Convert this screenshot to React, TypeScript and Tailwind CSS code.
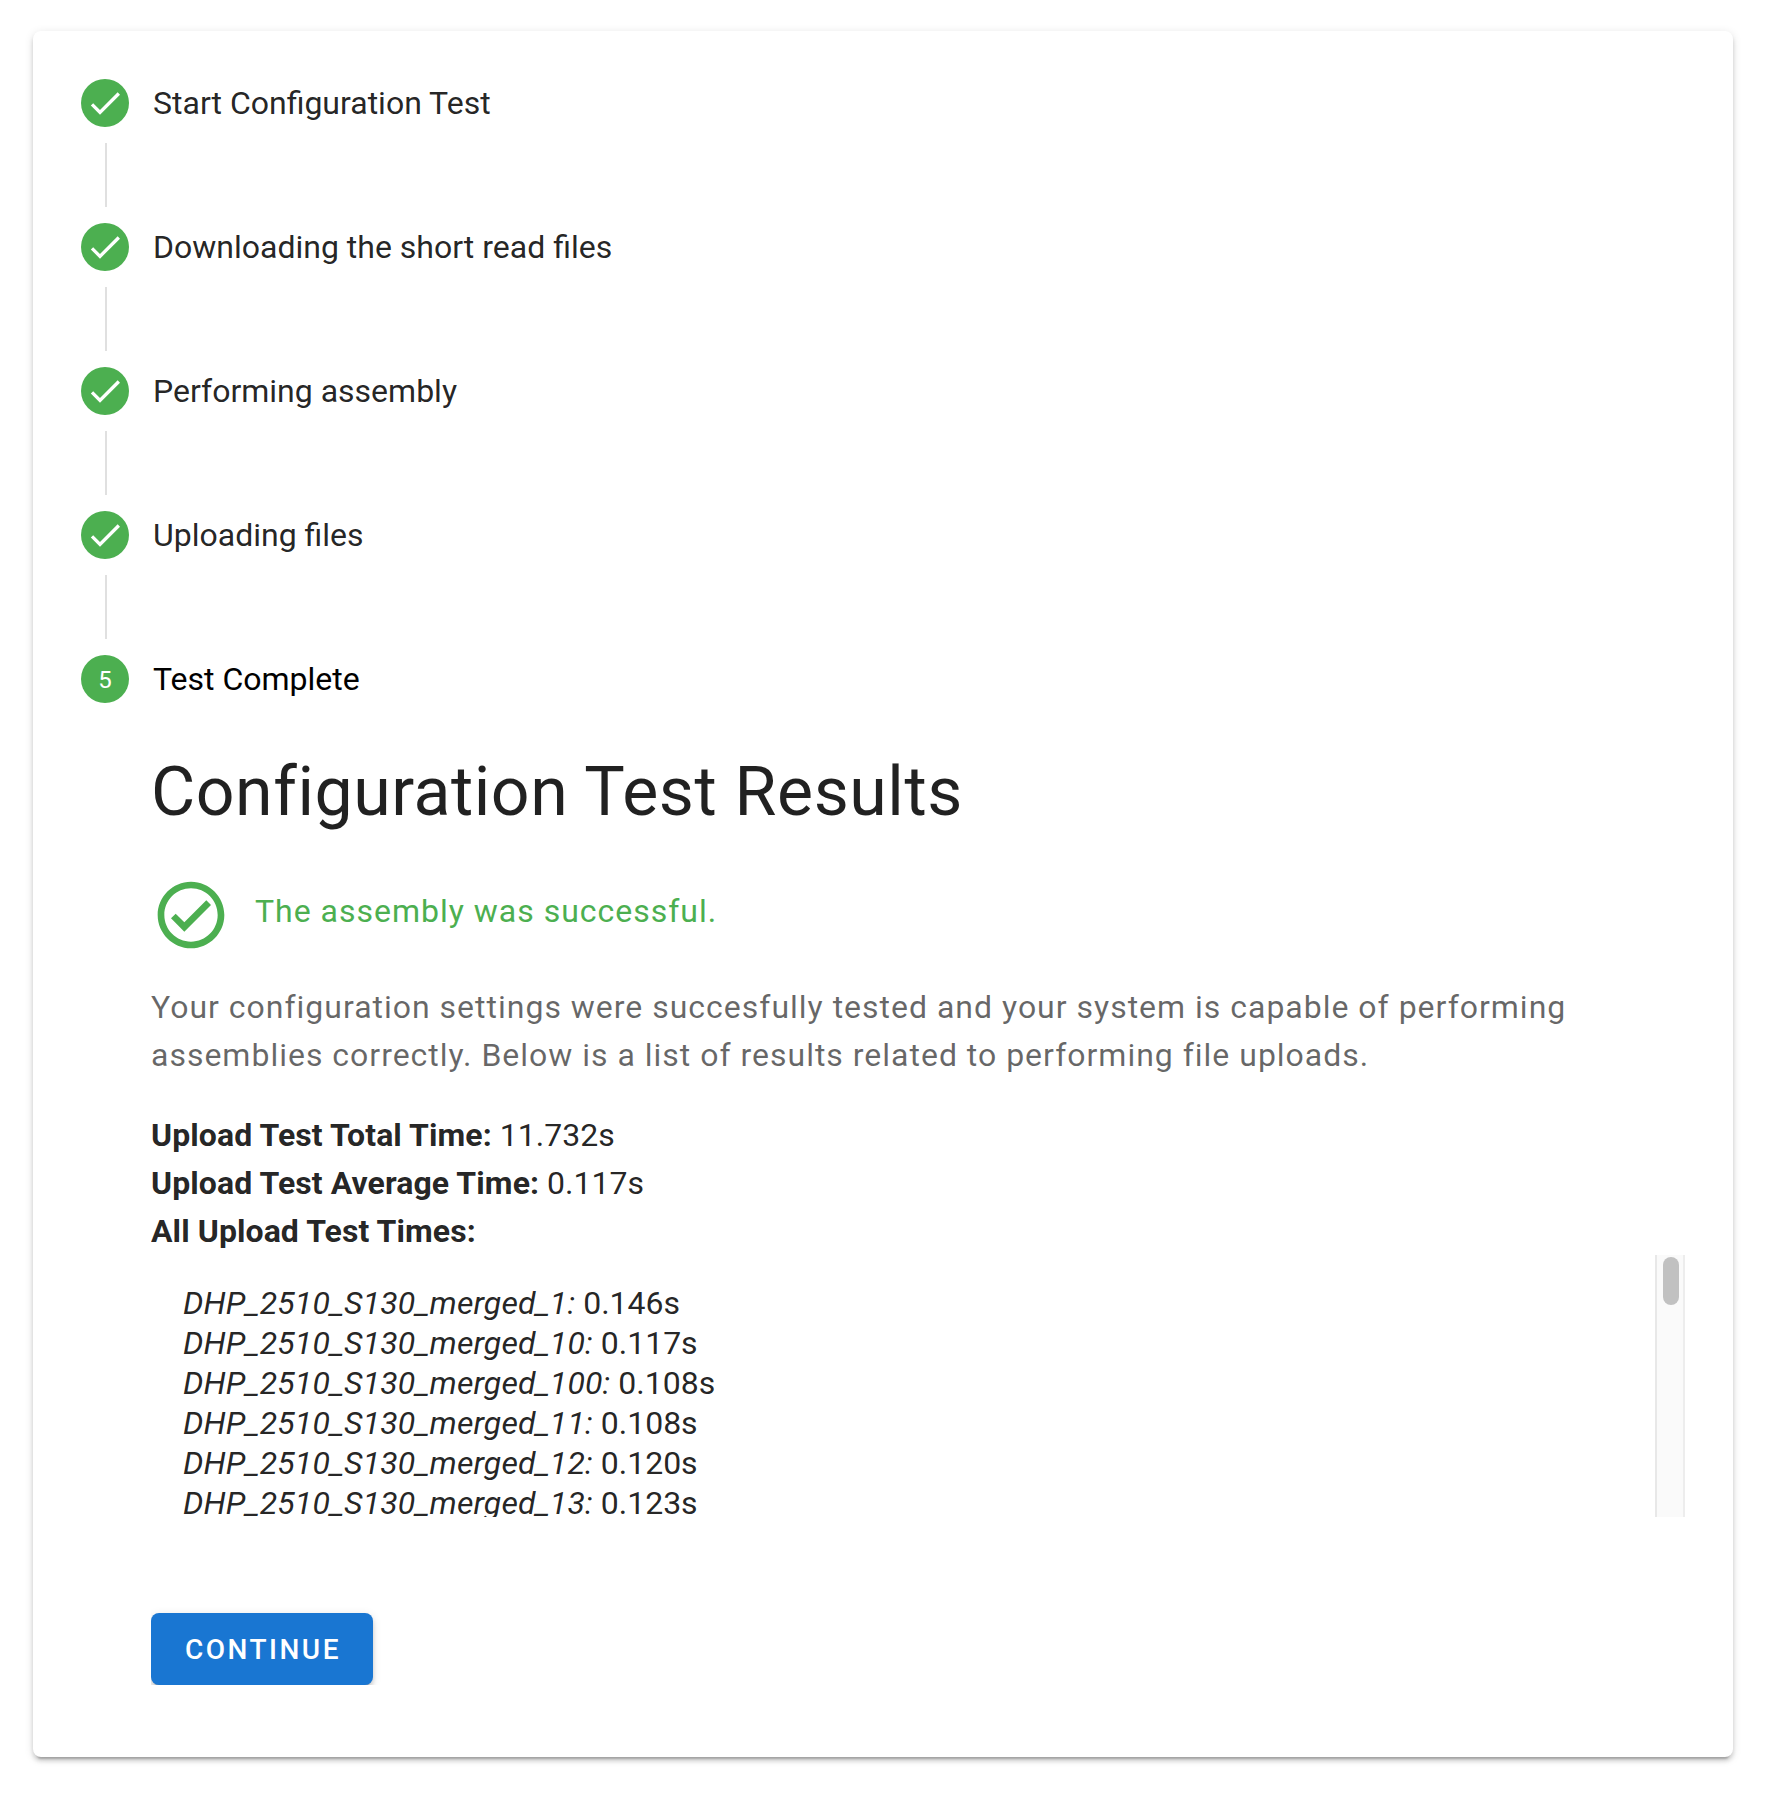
import React from "react";

const steps = [
  "Start Configuration Test",
  "Downloading the short read files",
  "Performing assembly",
  "Uploading files",
];

const times = [
  ["DHP_2510_S130_merged_1", "0.146s"],
  ["DHP_2510_S130_merged_10", "0.117s"],
  ["DHP_2510_S130_merged_100", "0.108s"],
  ["DHP_2510_S130_merged_11", "0.108s"],
  ["DHP_2510_S130_merged_12", "0.120s"],
  ["DHP_2510_S130_merged_13", "0.123s"],
];

const summary = [
  ["Upload Test Total Time:", "11.732s"],
  ["Upload Test Average Time:", "0.117s"],
  ["All Upload Test Times:", ""],
];

function Check() {
  return (
    <svg viewBox="0 0 24 24" className="size-10 fill-white">
      <path d="M21,7L9,19L3.5,13.5L4.91,12.09L9,16.17L19.59,5.59L21,7Z" />
    </svg>
  );
}

function CheckCircle() {
  return (
    <svg viewBox="0 0 24 24" className="size-20 shrink-0 fill-[#4caf50]">
      <path d="M12 2C6.5 2 2 6.5 2 12S6.5 22 12 22 22 17.5 22 12 17.5 2 12 2M12 20C7.59 20 4 16.41 4 12S7.59 4 12 4 20 7.59 20 12 16.41 20 12 20M16.59 7.58L10 14.17L7.41 11.59L6 13L10 17L18 9L16.59 7.58Z" />
    </svg>
  );
}

function StepBadge({ children }: { children: React.ReactNode }) {
  return (
    <span className="flex size-12 shrink-0 items-center justify-center rounded-full bg-[#4caf50] text-[24px] leading-none text-white">
      {children}
    </span>
  );
}

export default function App() {
  return (
    <div className="h-[1798px] w-[1769px] overflow-hidden bg-white pt-[31px] pl-[33px] font-[Roboto,sans-serif] text-[32px] text-black/87">
      <div className="h-[1726px] w-[1700px] rounded-lg bg-white px-12 pt-12 shadow-[0_6px_2px_-4px_rgba(0,0,0,0.2),0_4px_4px_0_rgba(0,0,0,0.14),0_2px_10px_0_rgba(0,0,0,0.12)]">
        {steps.map((label) => (
          <div key={label} className="h-36">
            <div className="flex items-center gap-6">
              <StepBadge>
                <Check />
              </StepBadge>
              <span className="leading-none">{label}</span>
            </div>
            <div className="mt-4 ml-6 h-16 w-0.5 bg-black/12" />
          </div>
        ))}
        <div className="flex items-center gap-6 text-black">
          <StepBadge>
            <span className="pt-0.5">5</span>
          </StepBadge>
          <span className="leading-none">Test Complete</span>
        </div>

        <div className="ml-[70px] overflow-hidden pt-[49px]">
          <h1 className="text-[68px] leading-[80px] tracking-[0.54px]">Configuration Test Results</h1>
          <div className="mt-[43px] flex gap-6 text-[#4caf50]">
            <CheckCircle />
            <p className="mt-3 leading-[48px] tracking-[0.99px]">The assembly was successful.</p>
          </div>
          <p className="mt-7 leading-[48px] tracking-[0.99px] text-black/60">
            Your configuration settings were succesfully tested and your system is capable of performing assemblies
            correctly. Below is a list of results related to performing file uploads.
          </p>
          <div className="mt-8 leading-[48px]">
            {summary.map(([label, value]) => (
              <p key={label}>
                <strong className="tracking-[0.08px]">{label}</strong> {value}
              </p>
            ))}
          </div>
          <div className="flex h-[262px] justify-between overflow-hidden">
            <ul className="pt-7 pl-8 leading-[40px]">
              {times.map(([name, time]) => (
                <li key={name}>
                  <em className="tracking-[0.14px]">{name}:</em> {time}
                </li>
              ))}
            </ul>
            <div className="h-[262px] w-[30px] border-x-2 border-l-[#e8e8e8] border-r-[#ededed] bg-[#fafafa] pt-0.5 pl-1.5">
              <div className="h-12 w-4 rounded-full bg-[#c1c1c1]" />
            </div>
          </div>
          <button className="mt-24 block h-[72px] w-[222px] rounded-lg bg-[#1976d2] pt-0.5 pl-0.5 text-[28px] font-medium tracking-[0.0892857143em] text-white shadow-[0_6px_2px_-4px_rgba(0,0,0,0.2),0_4px_4px_0_rgba(0,0,0,0.14),0_2px_10px_0_rgba(0,0,0,0.12)]">
            CONTINUE
          </button>
        </div>
      </div>
    </div>
  );
}
